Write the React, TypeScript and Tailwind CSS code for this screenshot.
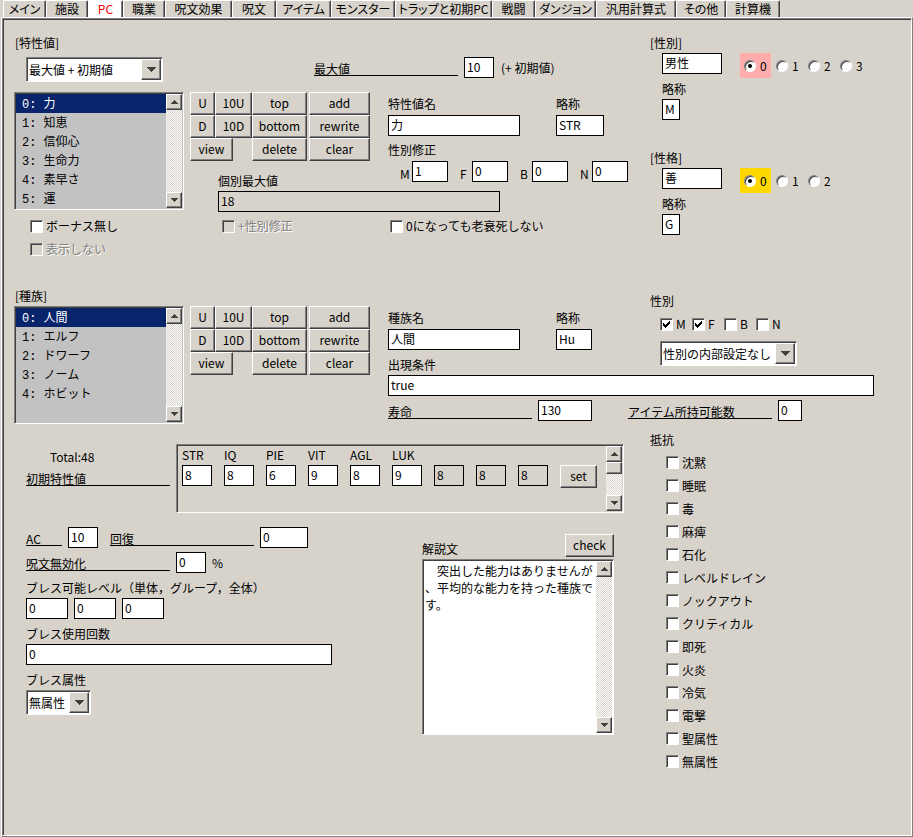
import { useId, type ReactNode } from 'react';

const raised =
  'border border-t-white border-l-white border-r-[#404040] border-b-[#404040] bg-[#d7d3cb] shadow-[inset_-1px_-1px_0_#808080]';
const sunken =
  'border border-t-[#808080] border-l-[#808080] border-r-white border-b-white p-px shadow-[inset_1px_1px_0_#404040]';

function Triangle({ up = false, large = false }: { up?: boolean; large?: boolean }) {
  return (
    <svg
      width={large ? 9 : 7}
      height={large ? 5 : 4}
      viewBox={large ? '0 0 9 5' : '0 0 7 4'}
      shapeRendering="crispEdges"
      aria-hidden="true"
      className="fill-[#404040]"
    >
      {large ? (
        <path d="M0 0h9v1H0zM1 1h7v1H1zM2 2h5v1H2zM3 3h3v1H3zM4 4h1v1H4z" />
      ) : up ? (
        <path d="M3 0h1v1H3zM2 1h3v1H2zM1 2h5v1H1zM0 3h7v1H0z" />
      ) : (
        <path d="M0 0h7v1H0zM1 1h5v1H1zM2 2h3v1H2zM3 3h1v1H3z" />
      )}
    </svg>
  );
}

function ScrollBar({ thumb = false }: { thumb?: boolean }) {
  return (
    <div className="flex w-4 shrink-0 flex-col bg-[conic-gradient(#fff_25%,#d7d3cb_0_50%,#fff_0_75%,#d7d3cb_0)] bg-[length:2px_2px]">
      <button type="button" aria-label="上へ" className={`flex h-4 items-center justify-center ${raised}`}>
        <Triangle up />
      </button>
      {thumb && <div className={`h-3 ${raised}`} />}
      <button type="button" aria-label="下へ" className={`mt-auto flex h-4 items-center justify-center ${raised}`}>
        <Triangle />
      </button>
    </div>
  );
}

function TextBox({
  value,
  width,
  id,
  label,
  disabled,
}: {
  value: string;
  width: string;
  id?: string;
  label?: string;
  disabled?: boolean;
}) {
  return (
    <input
      id={id}
      aria-label={label}
      type="text"
      defaultValue={value}
      disabled={disabled}
      className={`block h-[21px] border border-black bg-white px-0.5 pb-0.5 outline-none disabled:bg-[#d7d3cb] ${width}`}
    />
  );
}

function Field({ label, value, width, gap = 'gap-[3px]' }: { label: string; value: string; width: string; gap?: string }) {
  const id = useId();
  return (
    <div className={`flex flex-col ${gap}`}>
      <label htmlFor={id}>{label}</label>
      <TextBox id={id} value={value} width={width} />
    </div>
  );
}

function RuledField({
  label,
  value,
  width,
  rule = 'w-36',
  suffix,
}: {
  label: string;
  value: string;
  width: string;
  rule?: string;
  suffix?: string;
}) {
  const id = useId();
  return (
    <div className="flex items-end gap-1.5">
      <label htmlFor={id} className={`mb-0.5 h-[13px] border-b border-black leading-[12px] ${rule}`}>
        {label}
      </label>
      <TextBox id={id} value={value} width={width} />
      {suffix && <span className="mb-0.5">{suffix}</span>}
    </div>
  );
}

function CheckBox({ label, checked, disabled }: { label: string; checked?: boolean; disabled?: boolean }) {
  return (
    <label
      className={`flex items-center gap-[3px] ${disabled ? 'text-[#808080] [text-shadow:1px_1px_0_#fff]' : ''}`}
    >
      <span className="relative block size-[13px]">
        <input
          type="checkbox"
          defaultChecked={checked}
          disabled={disabled}
          className={`peer block size-[13px] appearance-none bg-white disabled:bg-[#d7d3cb] ${sunken}`}
        />
        <svg
          viewBox="0 0 7 7"
          shapeRendering="crispEdges"
          aria-hidden="true"
          className="pointer-events-none absolute top-[3px] left-[3px] hidden size-[7px] peer-checked:block"
        >
          <path d="M0 2h1v3H0zM1 3h1v3H1zM2 4h1v3H2zM3 3h1v3H3zM4 2h1v3H4zM5 1h1v3H5zM6 0h1v3H6z" />
        </svg>
      </span>
      <span>{label}</span>
    </label>
  );
}

function RadioRow({ name, count, highlight }: { name: string; count: number; highlight: string }) {
  return (
    <div role="radiogroup" aria-label={name} className="flex gap-px">
      {Array.from({ length: count }, (_, i) => (
        <label key={i} className={`flex h-[25px] w-[31px] items-center gap-1 pl-1 ${i === 0 ? highlight : ''}`}>
          <input
            type="radio"
            name={name}
            defaultChecked={i === 0}
            className="grid size-3 shrink-0 appearance-none place-content-center rounded-full border border-t-[#808080] border-r-white border-b-white border-l-[#808080] bg-white shadow-[inset_1px_1px_0_#404040] before:size-1 before:rounded-full checked:before:bg-black"
          />
          <span>{i}</span>
        </label>
      ))}
    </div>
  );
}

function DropDown({ label, value, width }: { label: string; value: string; width: string }) {
  return (
    <div className={`relative h-[25px] bg-white ${width} ${sunken}`}>
      <select aria-label={label} className="block h-full w-full appearance-none pl-px outline-none">
        <option>{value}</option>
      </select>
      <span
        className={`pointer-events-none absolute top-px right-px bottom-px flex w-5 items-center justify-center ${raised}`}
      >
        <Triangle large />
      </span>
    </div>
  );
}

function ListBox({ label, items }: { label: string; items: string[] }) {
  return (
    <div className={`flex h-[118px] w-[170px] bg-[#c2c2c2] ${sunken}`}>
      <select
        size={6}
        aria-label={label}
        defaultValue={items[0]}
        className="min-w-0 flex-1 overflow-hidden font-['Liberation_Mono','Noto_Sans_CJK_JP',monospace] outline-none"
      >
        {items.map((item) => (
          <option
            key={item}
            className="block h-[19px] min-h-0 px-1.5 py-0 leading-[19px] checked:bg-[linear-gradient(#08246b,#08246b)] checked:[-webkit-text-fill-color:white]"
          >
            {item}
          </option>
        ))}
      </select>
      <ScrollBar />
    </div>
  );
}

function PushButton({ children, className = '' }: { children: ReactNode; className?: string }) {
  return (
    <button type="button" className={`h-[23px] pb-px text-center leading-[16px] ${raised} ${className}`}>
      {children}
    </button>
  );
}

function EditButtons() {
  return (
    <div className="grid grid-cols-[25px_37px_57px_61px]">
      <PushButton>U</PushButton>
      <PushButton>10U</PushButton>
      <PushButton className="mr-0.5">top</PushButton>
      <PushButton>add</PushButton>
      <PushButton>D</PushButton>
      <PushButton>10D</PushButton>
      <PushButton className="mr-0.5">bottom</PushButton>
      <PushButton>rewrite</PushButton>
      <PushButton className="col-span-2 w-[43px]">view</PushButton>
      <PushButton className="mr-0.5">delete</PushButton>
      <PushButton>clear</PushButton>
    </div>
  );
}

const tabs = [
  { name: 'メイン', width: 'w-[43px]' },
  { name: '施設', width: 'w-[42px]' },
  { name: 'PC', width: 'w-[35px]' },
  { name: '職業', width: 'w-[42px]' },
  { name: '呪文効果', width: 'w-[67px]' },
  { name: '呪文', width: 'w-[44px]' },
  { name: 'アイテム', width: 'w-[55px]' },
  { name: 'モンスター', width: 'w-[64px]' },
  { name: 'トラップと初期PC', width: 'w-[97px]' },
  { name: '戦闘', width: 'w-[43px]' },
  { name: 'ダンジョン', width: 'w-[61px]' },
  { name: '汎用計算式', width: 'w-[80px]' },
  { name: 'その他', width: 'w-[50px]' },
  { name: '計算機', width: 'w-[54px]' },
];

function Tabs() {
  return (
    <div role="tablist" className="flex h-[17px] pl-[3px] [font-feature-settings:'palt']">
      {tabs.map(({ name, width }) => (
        <button
          key={name}
          type="button"
          role="tab"
          aria-selected={name === 'PC'}
          className={`h-[17px] shrink-0 overflow-hidden rounded-t-[2px] border-t border-r border-l border-t-white border-r-[#404040] border-l-white leading-[16px] whitespace-nowrap shadow-[inset_-1px_0_0_#808080] aria-selected:bg-white aria-selected:text-[#ff0000] ${width}`}
        >
          {name}
        </button>
      ))}
    </div>
  );
}

const resistances = [
  '沈黙', '睡眠', '毒', '麻痺', '石化', 'レベルドレイン', 'ノックアウト',
  'クリティカル', '即死', '火炎', '冷気', '電撃', '聖属性', '無属性',
];

const initialStats = [
  ['STR', '8'], ['IQ', '8'], ['PIE', '6'], ['VIT', '9'], ['AGL', '8'], ['LUK', '9'],
  ['', '8'], ['', '8'], ['', '8'],
];

function AbilitySection() {
  return (
    <section className="flex pt-[15px] pb-[31px]">
      <div className="w-[646px] shrink-0 pl-[10px]">
        <h2 className="pl-px">[特性値]</h2>
        <div className="mt-1.5 flex items-start pl-3">
          <DropDown label="表示内容" value="最大値 + 初期値" width="w-[137px]" />
          <div className="ml-[151px] flex items-center gap-[7px]">
            <RuledField label="最大値" value="10" width="w-[30px]" />
            <span>(+ 初期値)</span>
          </div>
        </div>
        <div className="mt-[10px] flex gap-1.5">
          <div>
            <ListBox label="特性値" items={['0: 力', '1: 知恵', '2: 信仰心', '3: 生命力', '4: 素早さ', '5: 運']} />
            <div className="mt-2 flex flex-col gap-[7px] pl-4">
              <CheckBox label="ボーナス無し" />
              <CheckBox label="表示しない" disabled />
            </div>
          </div>
          <div>
            <div className="flex gap-[18px]">
              <div>
                <EditButtons />
                <label htmlFor="individual-max" className="mt-3 block pl-7">
                  個別最大値
                </label>
              </div>
              <div className="pt-1">
                <div className="flex gap-9">
                  <Field label="特性値名" value="力" width="w-[132px]" />
                  <Field label="略称" value="STR" width="w-12" />
                </div>
                <p className="mt-1.5">性別修正</p>
                <div className="mt-[3px] flex gap-3 pl-3">
                  {[['M', '1'], ['F', '0'], ['B', '0'], ['N', '0']].map(([sex, value]) => (
                    <div key={sex} className="flex items-end">
                      <label htmlFor={`mod-${sex}`} className="w-3">
                        {sex}
                      </label>
                      <TextBox id={`mod-${sex}`} value={value} width="w-9" />
                    </div>
                  ))}
                </div>
              </div>
            </div>
            <div className="mt-0.5 pl-7">
              <TextBox id="individual-max" value="18" width="w-[282px]" disabled />
            </div>
            <div className="mt-1.5 grid grid-cols-[168px_auto] pl-8">
              <CheckBox label="+性別修正" disabled />
              <CheckBox label="0になっても老衰死しない" />
            </div>
          </div>
        </div>
      </div>
      <div className="flex flex-col gap-[30px]">
        <div>
          <h2>[性別]</h2>
          <div className="mt-0.5 flex gap-[18px] pl-3">
            <TextBox label="性別名" value="男性" width="w-[60px]" />
            <RadioRow name="性別番号" count={4} highlight="bg-[#ffacac]" />
          </div>
          <div className="mt-[3px] pl-3">
            <Field label="略称" value="M" width="w-[18px]" gap="gap-0.5" />
          </div>
        </div>
        <div>
          <h2>[性格]</h2>
          <div className="mt-0.5 flex gap-[18px] pl-3">
            <TextBox label="性格名" value="善" width="w-[60px]" />
            <RadioRow name="性格番号" count={3} highlight="bg-[#ffd800]" />
          </div>
          <div className="mt-[3px] pl-3">
            <Field label="略称" value="G" width="w-[18px]" gap="gap-0.5" />
          </div>
        </div>
      </div>
    </section>
  );
}

function RaceSection() {
  return (
    <section className="flex gap-[18px] pl-[10px]">
      <div>
        <h2 className="pl-px">[種族]</h2>
        <div className="mt-0.5 flex items-start gap-1.5">
          <ListBox label="種族" items={['0: 人間', '1: エルフ', '2: ドワーフ', '3: ノーム', '4: ホビット']} />
          <EditButtons />
        </div>
      </div>
      <div className="min-w-0 flex-1">
        <div className="flex">
          <div className="w-[262px] shrink-0 pt-[22px]">
            <div className="flex gap-9">
              <Field label="種族名" value="人間" width="w-[132px]" />
              <Field label="略称" value="Hu" width="w-9" />
            </div>
            <label htmlFor="condition" className="mt-[7px] block">
              出現条件
            </label>
          </div>
          <div className="pt-[5px]">
            <p>性別</p>
            <div className="mt-[7px] grid grid-cols-[32px_32px_32px_32px] pl-[10px]">
              <CheckBox label="M" checked />
              <CheckBox label="F" checked />
              <CheckBox label="B" />
              <CheckBox label="N" />
            </div>
            <div className="mt-[9px] -mb-2 pl-[10px]">
              <DropDown label="性別の内部設定" value="性別の内部設定なし" width="w-[137px]" />
            </div>
          </div>
        </div>
        <div className="mt-0.5 pr-9">
          <TextBox id="condition" value="true" width="w-full" />
        </div>
        <div className="mt-1 flex gap-9">
          <RuledField label="寿命" value="130" width="w-[54px]" />
          <RuledField label="アイテム所持可能数" value="0" width="w-6" />
        </div>
      </div>
    </section>
  );
}

function StatusSection() {
  return (
    <section className="flex">
      <div className="w-[646px] shrink-0 pt-5 pl-[22px]">
        <div className="flex gap-1.5">
          <div className="w-36 pt-[5px]">
            <p className="pl-6">Total:48</p>
            <p className="mt-2 h-[13px] border-b border-black leading-[12px]">初期特性値</p>
          </div>
          <div className={`flex h-[69px] w-[448px] ${sunken}`}>
            <div className="flex flex-1 items-end gap-3 self-start pl-1 pt-px">
              {initialStats.map(([name, value], i) => (
                <div key={i} className="flex w-[30px] flex-col gap-0.5">
                  <label htmlFor={`stat-${i}`} className="h-4">
                    {name}
                  </label>
                  <TextBox id={`stat-${i}`} value={value} width="w-[30px]" disabled={!name} />
                </div>
              ))}
              <PushButton className="-mb-0.5 w-[37px]">set</PushButton>
            </div>
            <ScrollBar thumb />
          </div>
        </div>
        <div className="mt-[14px] flex">
          <div className="w-[396px]">
            <div className="flex gap-3">
              <RuledField label="AC" value="10" width="w-[30px]" rule="w-9" />
              <RuledField label="回復" value="0" width="w-12" />
            </div>
            <div className="mt-1">
              <RuledField label="呪文無効化" value="0" width="w-[30px]" suffix="%" />
            </div>
            <p className="mt-[7px]">ブレス可能レベル（単体，グループ，全体）</p>
            <div className="mt-0.5 flex gap-1.5">
              <TextBox label="単体" value="0" width="w-[42px]" />
              <TextBox label="グループ" value="0" width="w-[42px]" />
              <TextBox label="全体" value="0" width="w-[42px]" />
            </div>
            <div className="mt-[7px]">
              <Field label="ブレス使用回数" value="0" width="w-[306px]" gap="gap-0.5" />
            </div>
            <p className="mt-[7px] mb-0.5">ブレス属性</p>
            <DropDown label="ブレス属性" value="無属性" width="w-[65px]" />
          </div>
          <div className="w-48 pt-[7px]">
            <div className="flex items-end justify-between">
              <label htmlFor="description">解説文</label>
              <PushButton className="w-[49px]">check</PushButton>
            </div>
            <div className={`mt-0.5 flex h-44 bg-white ${sunken}`}>
              <textarea
                id="description"
                className="block min-w-0 flex-1 resize-none overflow-hidden pt-px pl-px leading-[17px] [line-break:anywhere] outline-none"
                defaultValue="　突出した能力はありませんが、平均的な能力を持った種族です。"
              />
              <ScrollBar />
            </div>
          </div>
        </div>
      </div>
      <div className="pt-2">
        <h2>抵抗</h2>
        <ul className="mt-[3px] pl-4">
          {resistances.map((name) => (
            <li key={name} className="flex h-[23px] items-center">
              <CheckBox label={name} />
            </li>
          ))}
        </ul>
      </div>
    </section>
  );
}

export default function App() {
  return (
    <div className="flex min-h-screen flex-col bg-[#d7d3cb] font-['Noto_Sans_CJK_JP',sans-serif] text-[12px] leading-[16px] text-black">
      <Tabs />
      <div className="ml-px flex flex-1 flex-col border border-t-white border-r-[#808080] border-b-[#808080] border-l-white">
        <main className={`flex-1 ${sunken}`}>
          <AbilitySection />
          <RaceSection />
          <StatusSection />
        </main>
      </div>
    </div>
  );
}
